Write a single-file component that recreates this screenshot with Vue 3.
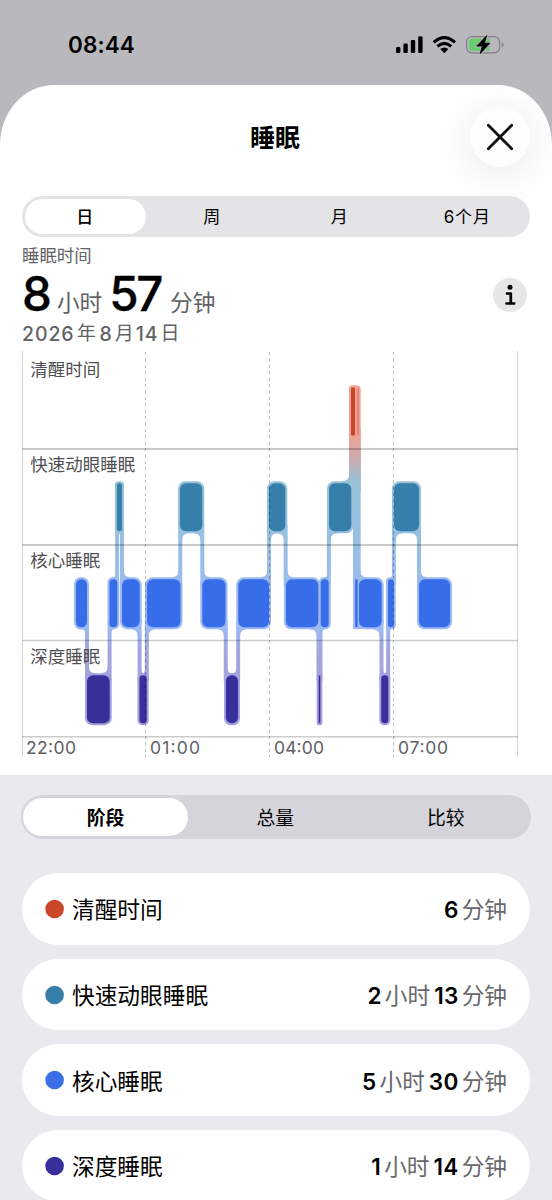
<script setup>
const ranges = ['日', '周', '月', '6个月']
const modes = ['阶段', '总量', '比较']
const rows = [
  { name: '清醒时间', color: '#cb4529', parts: [['6', '分钟']] },
  { name: '快速动眼睡眠', color: '#367fab', parts: [['2', '小时'], ['13', '分钟']] },
  { name: '核心睡眠', color: '#3a6fe8', parts: [['5', '小时'], ['30', '分钟']] },
  { name: '深度睡眠', color: '#37309b', parts: [['1', '小时'], ['14', '分钟']] },
]

// Stage index: 0 awake, 1 REM, 2 core, 3 deep
const tops = [387.5, 483.3, 579.3, 675.2]
const fills = ['#cb4529', '#367fab', '#386de9', '#37309b']
const BAR = 48
const PAD = 2
const segments = [
  [76, 87, 2], [87, 109.7, 3], [109.5, 117.3, 2], [116.9, 122, 1], [122, 139.7, 2],
  [139.5, 146.7, 3], [147, 180.5, 2], [180, 202.3, 1], [202.3, 225.5, 2], [226, 238, 3],
  [238.3, 269, 2], [269, 285.3, 1], [286, 318.3, 2], [318.7, 320.3, 3], [320.7, 328.7, 2],
  [329, 351.3, 1], [351, 355, 0], [355.2, 357.6, 2], [359, 381.7, 2], [381.3, 388.3, 3],
  [388, 393.8, 2], [394, 419, 1], [419, 450, 2],
].map(([a, b, s]) => ({
  x: a, w: b - a, s, y: tops[s], fill: fills[s],
  r: s === 0 ? 1 : Math.min(6, (b - a) / 2.1),
}))

const joins = segments.slice(1).flatMap((n, i) => {
  const p = segments[i]
  if (p.s === n.s) return []
  const x = (p.x + p.w + n.x) / 2
  const wide = p.s === 0
  const l = wide ? 353 : x - PAD
  const r = wide ? 360.7 : x + PAD
  const hi = Math.min(p.s, n.s)
  const lo = Math.max(p.s, n.s)
  const y1 = tops[hi] + BAR + PAD
  const y2 = tops[lo] - PAD
  const pr = Math.max(0, Math.min(6.5, (p.w - 3) / 2))
  const nr = wide ? 6 : Math.max(0, Math.min(6.5, (n.w - 3) / 2))
  const py = p.s < n.s ? y1 : y2
  const pd = p.s < n.s ? 1 : -1
  const ny = p.s < n.s ? y2 : y1
  const out = [`M${l} ${y1 - 8}H${r}V${y2 + 8}H${l}Z`]
  if (!wide) out.push(`M${l - pr} ${py - pd}V${py}Q${l} ${py} ${l} ${py + pd * pr}H${l + 1}V${py - pd}Z`)
  out.push(`M${r + nr} ${ny + pd}V${ny}Q${r} ${ny} ${r} ${ny - pd * nr}H${r - 1}V${ny + pd}Z`)
  return out
})

const stages = [['清醒时间', 375.5], ['快速动眼睡眠', 471], ['核心睡眠', 567], ['深度睡眠', 662.8]]
const hours = [['22:00', 26], ['01:00', 150], ['04:00', 274], ['07:00', 398]]
</script>

<template>
  <div class="screen">
    <header class="status">
      <span class="clock">08:44</span>
      <svg class="status-icons" width="110" height="24" viewBox="394 33 110 24">
        <rect x="396" y="47" width="4.4" height="6" rx="1.3" />
        <rect x="403.4" y="43.6" width="4.4" height="9.4" rx="1.3" />
        <rect x="410.8" y="40" width="4.4" height="13" rx="1.3" />
        <rect x="418.2" y="36.3" width="4.4" height="16.7" rx="1.3" />
        <g fill="none" stroke="#000" stroke-width="3.1">
          <path d="M433.7 42.3Q444.3 32.8 455 42.3" />
          <path d="M437.4 46.4Q444.3 40.2 451.3 46.4" />
        </g>
        <path d="M440.2 49.1Q444.3 45.8 448.4 49.1L444.3 53.2Z" />
        <rect x="466.6" y="36.6" width="33" height="16.2" rx="5.2" fill="none" stroke="#7f7f84" stroke-width="1.2" />
        <path d="M473 38.6H489.5V50.8H473Q469 50.8 469 46.8V42.6Q469 38.6 473 38.6Z" fill="#65cd6c" />
        <path d="M501.8 42.3Q503.6 43 503.6 44.7T501.8 47.1Z" fill="#7f7f84" />
        <path d="M486.7 35.6L476.7 46.1H482.3L480.1 53.7L489.9 43.2H484.4Z" stroke="#b9b8bd" stroke-width="2.4" />
        <path d="M486.7 35.6L476.7 46.1H482.3L480.1 53.7L489.9 43.2H484.4Z" stroke="#000" stroke-width=".8" />
      </svg>
    </header>

    <main class="sheet">
      <div class="titlebar">
        <h1>睡眠</h1>
        <button class="close" aria-label="关闭">
          <svg width="28" height="28" viewBox="0 0 28 28"><path d="M2.3 2.3L25.7 25.7M25.7 2.3L2.3 25.7" /></svg>
        </button>
      </div>

      <nav class="tabs ranges">
        <span v-for="(r, i) in ranges" :key="r" :class="{ on: i === 0 }">{{ r }}</span>
      </nav>

      <section class="summary">
        <div>
          <p class="caption">睡眠时间</p>
          <p class="total"><b class="h">8</b><i>小时</i><b class="m">57</b><i>分钟</i></p>
          <p class="date"><span>2026</span>年<span class="n">8</span>月<span class="n d">14</span>日</p>
        </div>
        <svg class="info" width="34" height="34" viewBox="0 0 34 34">
          <circle cx="17" cy="17" r="17" fill="#e6e6e7" />
          <circle cx="17" cy="9.2" r="2.5" />
          <path d="M14 15.5H17.8V25.5M13.5 25.5H21.2" fill="none" stroke="#000" stroke-width="2.7" stroke-linecap="round" stroke-linejoin="round" />
        </svg>
      </section>

      <svg class="chart" width="552" height="424" viewBox="0 351 552 424">
        <defs>
          <linearGradient id="halo" gradientUnits="userSpaceOnUse" x1="0" y1="385" x2="0" y2="725">
            <stop offset="0" stop-color="#f0a496" />
            <stop offset=".15" stop-color="#eda394" />
            <stop offset=".22" stop-color="#c9acb0" />
            <stop offset=".285" stop-color="#96c1d6" />
            <stop offset=".43" stop-color="#98c0e1" />
            <stop offset=".57" stop-color="#9bbbee" />
            <stop offset=".715" stop-color="#9db9f3" />
            <stop offset=".78" stop-color="#a3a6df" />
            <stop offset="1" stop-color="#a49bdb" />
          </linearGradient>
        </defs>
        <g fill="url(#halo)">
          <path v-for="(d, i) in joins" :key="'j' + i" :d="d" />
          <path d="M349.2 389Q349.2 385.5 352 385.5H357.9Q360.7 385.5 360.7 389V492H349.2Z" />
          <path d="M342 482.3V481.3Q349.2 481.3 349.2 474V482.3Z" />
          <rect x="353.2" y="578" width="9" height="51" rx="1" />
          <rect v-for="(s, i) in segments" :key="i" :x="s.x - 2" :y="s.y - 2" :width="s.w + 4" height="52" :rx="s.r + 1.3" />
        </g>
        <rect v-for="(s, i) in segments" :key="i" :x="s.x" :y="s.y" :width="s.w" height="48" :rx="s.r" :fill="s.fill" />
        <rect x="357.3" y="388" width="1.5" height="47" fill="#e57864" />
        <g stroke="#000" stroke-opacity=".27">
          <path d="M22 449H518M22 545H518" stroke-width="1.3" />
          <path d="M22 640.5H518M22 736.7H518" stroke-width="1.6" stroke-opacity=".2" />
          <path d="M22.5 351V757M517.5 351V757" stroke-opacity=".17" />
          <path d="M145.5 352V757M269.5 352V757M393.5 352V757" stroke-dasharray="3.2 3.2" />
        </g>
        <g class="stage">
          <text v-for="s in stages" :key="s[0]" x="30.3" :y="s[1]">{{ s[0] }}</text>
        </g>
        <g class="hour">
          <text v-for="h in hours" :key="h[0]" :x="h[1]" y="753.7" textLength="50">{{ h[0] }}</text>
        </g>
      </svg>
    </main>

    <section class="details">
      <nav class="tabs modes">
        <span v-for="(m, i) in modes" :key="m" :class="{ on: i === 0 }">{{ m }}</span>
      </nav>
      <ul>
        <li v-for="r in rows" :key="r.name">
          <svg class="dot" width="20" height="20" viewBox="0 0 20 20"><circle cx="9.6" cy="10" r="9.3" :fill="r.color" /></svg>
          <span>{{ r.name }}</span>
          <span class="value"><template v-for="p in r.parts" :key="p[1]"><b>{{ p[0] }}</b><i>{{ p[1] }}</i></template></span>
        </li>
      </ul>
    </section>
  </div>
</template>

<style>
body { background: #eae9ee; }
</style>

<style scoped>
.screen {
  width: 552px; height: 1200px; overflow: hidden;
  display: flex; flex-direction: column;
  background: #b9b8bd; color: #000;
  font-family: Inter, "Noto Sans CJK SC", sans-serif;
}
h1, p, ul { margin: 0; padding: 0; }
i { font-style: normal; }
.status {
  height: 85px; flex: none; box-sizing: border-box;
  padding: 33px 48px 0 68px;
  display: flex; justify-content: space-between; align-items: flex-start;
}
.clock { font-size: 22.5px; line-height: 24px; font-weight: 600; letter-spacing: .1px; }
.status-icons { display: block; }
.sheet {
  height: 690px; flex: none; background: #fff;
  border-radius: 54px 54px 0 0 / 60px 60px 0 0;
  display: flex; flex-direction: column; overflow: hidden;
}
.titlebar {
  height: 111px; flex: none; box-sizing: border-box;
  padding: 22px 22px 0; display: grid; grid-template-columns: 60px 1fr 60px;
}
.titlebar h1 {
  grid-column: 2; text-align: center; font-size: 25px; line-height: 63px; font-weight: 700;
  margin-right: 2px;
}
.close {
  width: 60px; height: 60px; border: 0; padding: 0; border-radius: 50%;
  background: #fdfdfd; display: grid; place-items: center;
  box-shadow: 0 5px 38px 6px rgba(0, 0, 0, .07);
}
.close svg { fill: none; stroke: #111; stroke-width: 2.8; stroke-linecap: round; }
.tabs { display: flex; box-sizing: border-box; flex: none; }
.tabs span { flex: 1; display: grid; place-items: center; border-radius: 30px; }
.tabs .on { background: #fff; }
.ranges {
  width: 508px; height: 40.5px; margin-left: 22px; padding: 3px 0 3px 3px;
  border-radius: 21px; background: #e4e4e6;
  font-size: 17px; font-weight: 400; letter-spacing: .8px;
}
.ranges span, .modes span { box-sizing: border-box; padding-bottom: 2px; }
.ranges span { padding-left: 2px; }
.ranges .on { flex: 0 0 120.5px; margin-right: 2px; padding-left: 0; font-weight: 500; }
.summary {
  height: 114.5px; flex: none; box-sizing: border-box; padding: 7px 25px 0 22px;
  display: flex; justify-content: space-between; color: #626266;
}
.info { margin-top: 34.5px; fill: #000; }
.caption { font-size: 17.4px; line-height: 24px; font-weight: 400; }
.total { height: 51px; display: flex; align-items: baseline; line-height: 51px; }
.total b { font-size: 47.5px; font-weight: 500; color: #000; -webkit-text-stroke: .35px #000; }
.total i { font-size: 22.7px; font-weight: 400; }
.total .h { margin-right: 5px; }
.total .m { margin: 0 9px 0 7px; letter-spacing: -2.4px; }
.date { font-size: 19px; line-height: 26px; margin-top: 2px; font-weight: 400; display: flex; }
.date span { font-size: 19.5px; letter-spacing: .9px; margin-right: 2.5px; font-weight: 500; }
.date .n { margin: 0 2px 0 3.5px; }
.date .d { margin-left: 2px; }
.chart { display: block; flex: none; }
.stage { font-size: 17.5px; font-weight: 400; fill: #4f4f53; }
.hour { font-size: 17.5px; font-weight: 400; fill: #606064; }
.details { background: #eae9ee; flex: 1; padding: 20px 21px 0; }
.modes {
  height: 44px; padding: 3px 0 3px 2px; border-radius: 22px; background: #d5d4db;
  font-size: 18.8px; font-weight: 400;
}
.modes .on { font-weight: 700; flex: 0 0 165px; margin-right: 2px; }
.details ul { list-style: none; padding: 34.3px 1px 0; display: grid; gap: 14.3px; }
.details li {
  height: 71.3px; box-sizing: border-box; border-radius: 36px; background: #fff;
  display: flex; align-items: center; padding: 0 23px; font-size: 22.7px;
}
.dot { margin-right: 7px; }
.value { margin-left: auto; display: flex; align-items: baseline; }
.value b { font-weight: 600; font-size: 22.5px; letter-spacing: .3px; margin: 0 3px 0 4px; }
.value i { color: #68686c; }
</style>
